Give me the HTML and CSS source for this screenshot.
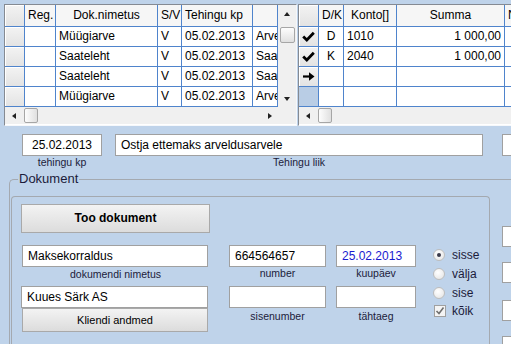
FILE: index.html
```html
<!DOCTYPE html>
<html lang="et">
<head>
    <meta charset="UTF-8">
    <meta name="viewport" content="width=device-width, initial-scale=1.0">
    <title>Tehing</title>
    <link rel="stylesheet" href="styles.css">
</head>
<body>
    <!-- document list and posting rows -->
    <div class="grids">
        <div class="grid grid-left">
            <div class="grid-main">
                <div class="cells">
                    <div class="cell rh"></div>
                    <div class="cell head">Reg.</div>
                    <div class="cell head center">Dok.nimetus</div>
                    <div class="cell head">S/V</div>
                    <div class="cell head">Tehingu kp</div>
                    <div class="cell head"></div>

                    <div class="cell rh"></div>
                    <div class="cell"></div>
                    <div class="cell">Müügiarve</div>
                    <div class="cell">V</div>
                    <div class="cell">05.02.2013</div>
                    <div class="cell">Arve</div>

                    <div class="cell rh"></div>
                    <div class="cell"></div>
                    <div class="cell">Saateleht</div>
                    <div class="cell">V</div>
                    <div class="cell">05.02.2013</div>
                    <div class="cell">Saat</div>

                    <div class="cell rh"></div>
                    <div class="cell"></div>
                    <div class="cell">Saateleht</div>
                    <div class="cell">V</div>
                    <div class="cell">05.02.2013</div>
                    <div class="cell">Saat</div>

                    <div class="cell rh"></div>
                    <div class="cell"></div>
                    <div class="cell">Müügiarve</div>
                    <div class="cell">V</div>
                    <div class="cell">05.02.2013</div>
                    <div class="cell">Arve</div>
                </div>
                <div class="vscroll">
                    <div class="sb-btn"><span class="tri up"></span></div>
                    <div class="thumb thumb-v"></div>
                    <div class="sb-fill"></div>
                    <div class="sb-btn"><span class="tri down"></span></div>
                </div>
            </div>
            <div class="hscroll">
                <div class="sb-btn"><span class="tri left"></span></div>
                <div class="thumb thumb-h"></div>
                <div class="sb-fill"></div>
                <div class="sb-btn"><span class="tri right"></span></div>
                <div class="sb-corner"></div>
            </div>
        </div>

        <div class="grid grid-right">
            <div class="grid-main">
                <div class="cells">
                    <div class="cell rh"></div>
                    <div class="cell head center">D/K</div>
                    <div class="cell head center">Konto[]</div>
                    <div class="cell head center">Summa</div>
                    <div class="cell head">N</div>

                    <div class="cell rh mark">
                        <svg width="13" height="11" viewBox="0 0 13 11"><path d="M1.2 5.5 L4.8 9 L11.8 1.8" fill="none" stroke="#000" stroke-width="2.8"/></svg>
                    </div>
                    <div class="cell center">D</div>
                    <div class="cell">1010</div>
                    <div class="cell right">1 000,00</div>
                    <div class="cell"></div>

                    <div class="cell rh mark">
                        <svg width="13" height="11" viewBox="0 0 13 11"><path d="M1.2 5.5 L4.8 9 L11.8 1.8" fill="none" stroke="#000" stroke-width="2.8"/></svg>
                    </div>
                    <div class="cell center">K</div>
                    <div class="cell">2040</div>
                    <div class="cell right">1 000,00</div>
                    <div class="cell"></div>

                    <div class="cell rh mark">
                        <svg width="13" height="9" viewBox="0 0 13 9"><path d="M1 4.5 H10" stroke="#000" stroke-width="2.2"/><path d="M7 0.3 L12.5 4.5 L7 8.7 Z" fill="#000"/></svg>
                    </div>
                    <div class="cell"></div>
                    <div class="cell"></div>
                    <div class="cell"></div>
                    <div class="cell"></div>

                    <div class="cell rh rh-sel"></div>
                    <div class="cell"></div>
                    <div class="cell"></div>
                    <div class="cell"></div>
                    <div class="cell"></div>
                </div>
            </div>
            <div class="hscroll">
                <div class="sb-btn"><span class="tri left"></span></div>
                <div class="thumb thumb-h"></div>
                <div class="sb-fill"></div>
            </div>
        </div>
    </div>

    <!-- deal header -->
    <div class="deal">
        <div class="field f-date">
            <div class="box center">25.02.2013</div>
            <div class="cap">tehingu kp</div>
        </div>
        <div class="field f-type">
            <div class="box">Ostja ettemaks arveldusarvele</div>
            <div class="cap">Tehingu liik</div>
        </div>
        <div class="field f-extra">
            <div class="box"></div>
        </div>
    </div>

    <fieldset class="doc">
        <legend>Dokument</legend>
        <div class="doc-body">
            <div class="panel">
                <div class="panel-grid">
                    <div class="btn btn-get">Too dokument</div>

                    <div class="box doc-name">Maksekorraldus</div>
                    <div class="box num-box c2 r3">664564657</div>
                    <div class="box date-box c3 r3">25.02.2013</div>

                    <div class="cap c1 r4 cap-name">dokumendi nimetus</div>
                    <div class="cap c2 r4">number</div>
                    <div class="cap c3 r4">kuupäev</div>

                    <div class="box client">Kuues Särk AS</div>
                    <div class="box num-box c2 r6"></div>
                    <div class="box date-box c3 r6"></div>

                    <div class="btn btn-client">Kliendi andmed</div>
                    <div class="cap c2 r7">sisenumber</div>
                    <div class="cap c3 r7">tähtaeg</div>

                    <div class="choices">
                        <div class="choice"><span class="radio on"></span>sisse</div>
                        <div class="choice"><span class="radio"></span>välja</div>
                        <div class="choice"><span class="radio"></span>sise</div>
                        <div class="choice choice-all">
                            <span class="check">
                                <svg width="10" height="10" viewBox="0 0 10 10"><path d="M1.5 5 L4 7.5 L8.5 1.5" fill="none" stroke="#6f6f6f" stroke-width="1.6"/></svg>
                            </span>kõik
                        </div>
                    </div>
                </div>
            </div>
            <div class="side">
                <div class="box side-box"></div>
                <div class="box side-box"></div>
                <div class="box side-box"></div>
                <div class="box side-box"></div>
            </div>
        </div>
    </fieldset>
</body>
</html>
```

FILE: styles.css
```css
body {
    margin: 0;
    width: 511px;
    height: 344px;
    overflow: hidden;
    background-color: #bfd3ea;
    font-family: "Liberation Sans", Arial, sans-serif;
    color: #000;
}

/* grids on top */
.grids {
    display: flex;
    gap: 1px;
    padding: 4px 0 0 4px;
    height: 122px;
}
.grid {
    box-sizing: border-box;
    height: 122px;
    flex-shrink: 0;
    display: flex;
    flex-direction: column;
    border: 1px solid;
    border-color: #858a92 #f6f8fb #f6f8fb #858a92;
    background: #fff;
    overflow: hidden;
}
.grid-left {
    width: 293px;
}
.grid-right {
    width: 240px;
}
.grid-main {
    display: flex;
    height: 102px;
}
.cells {
    display: grid;
    grid-template-rows: 22px;
    grid-auto-rows: 20px;
    align-content: start;
    overflow: hidden;
}
.grid-left .cells {
    width: 273px;
    grid-template-columns: 20px 31px 102px 24px 71px 25px;
}
.grid-right .cells {
    width: 238px;
    grid-template-columns: 20px 25px 53px 108px 40px;
}
.cell {
    box-sizing: border-box;
    border-right: 1px solid #4f84cc;
    border-bottom: 1px solid #4f84cc;
    padding: 0 3px;
    font-size: 12px;
    line-height: 19px;
    white-space: nowrap;
    overflow: hidden;
}
.head {
    background: #f6f6f6;
    line-height: 21px;
}
.rh {
    padding: 0;
    background: linear-gradient(#f3f3f3, #e3e3e3);
    box-shadow: inset 1px 1px #fff;
}
.rh-sel {
    background: #b9cde5;
    box-shadow: none;
}
.mark {
    display: flex;
    align-items: center;
    justify-content: center;
}
.center {
    text-align: center;
}
.right {
    text-align: right;
}

/* scrollbars */
.vscroll {
    width: 18px;
    display: flex;
    flex-direction: column;
    align-items: center;
    background: #f0f0f0;
}
.hscroll {
    height: 17px;
    display: flex;
    align-items: center;
    background: #f0f0f0;
}
.sb-btn {
    width: 17px;
    height: 17px;
    display: flex;
    align-items: center;
    justify-content: center;
    flex-shrink: 0;
}
.sb-fill {
    flex: 1;
}
.sb-corner {
    width: 18px;
    height: 17px;
}
.thumb {
    box-sizing: border-box;
    border: 1px solid #a6a6a6;
    border-radius: 2px;
    background: linear-gradient(#fdfdfd, #e0e0e0);
}
.thumb-v {
    width: 15px;
    height: 16px;
    margin-top: 5px;
}
.thumb-h {
    width: 14px;
    height: 15px;
    margin-left: 2px;
    background: linear-gradient(90deg, #fdfdfd, #e0e0e0);
}
.tri {
    width: 0;
    height: 0;
    border: 3px solid transparent;
}
.tri.up {
    border-bottom: 4px solid #222;
    border-top-width: 0;
}
.tri.down {
    border-top: 4px solid #222;
    border-bottom-width: 0;
}
.tri.left {
    border-right: 4px solid #222;
    border-left-width: 0;
}
.tri.right {
    border-left: 4px solid #222;
    border-right-width: 0;
}

/* inputs and captions */
.box {
    box-sizing: border-box;
    height: 22px;
    border: 1px solid #a0a0a0;
    background: #fff;
    padding: 0 5px;
    font-size: 12px;
    line-height: 20px;
    white-space: nowrap;
    overflow: hidden;
}
.cap {
    font-size: 10.5px;
    line-height: 13px;
    text-align: center;
    color: #1b1b3a;
}

.deal {
    display: flex;
    margin: 8px 0 0 22px;
}
.field {
    flex-shrink: 0;
}
.f-date {
    width: 80px;
}
.f-type {
    width: 368px;
    margin-left: 13px;
}
.f-extra {
    width: 60px;
    margin-left: 19px;
}

/* Dokument group */
.doc {
    margin: 3px 0 0 9px;
    padding: 0 0 0 1px;
    width: 540px;
    min-width: 0;
    border: 1px solid #a4a9b0;
    border-right: none;
    border-bottom: none;
    border-radius: 5px 0 0 0;
}
.doc legend {
    margin-left: 7px;
    padding: 0 1px;
    font-size: 13px;
    line-height: 14px;
    color: #1b1b3a;
}
.doc-body {
    display: flex;
    margin-top: 10px;
}
.panel {
    box-sizing: border-box;
    width: 479px;
    height: 160px;
    flex-shrink: 0;
    padding: 7px 0 0 9px;
    border: 1px solid #a4a9b0;
    border-bottom: none;
    border-radius: 4px 4px 0 0;
}
.panel-grid {
    display: grid;
    grid-template-columns: 208px 107px 96px 80px;
    grid-template-rows: 29px 12px 22px 14px 5px 22px 24px;
}
.c1 { grid-column: 1; }
.c2 { grid-column: 2; }
.c3 { grid-column: 3; }
.r3 { grid-row: 3; }
.r4 { grid-row: 4; }
.r6 { grid-row: 6; }
.r7 { grid-row: 7; }

.btn {
    box-sizing: border-box;
    border: 1px solid #a9a9a9;
    background: linear-gradient(#f3f3f3, #dcdcdc);
    text-align: center;
    color: #000;
}
.btn-get {
    grid-column: 1;
    grid-row: 1;
    width: 189px;
    font-size: 12px;
    font-weight: bold;
    line-height: 27px;
}
.btn-client {
    grid-column: 1;
    grid-row: 7;
    width: 186px;
    margin-left: 1px;
    font-size: 11px;
    line-height: 22px;
}
.doc-name {
    grid-column: 1;
    grid-row: 3;
    width: 186px;
    margin-left: 1px;
}
.cap-name {
    width: 189px;
    padding-top: 1px;
}
.client {
    grid-column: 1;
    grid-row: 6;
    width: 187px;
}
.num-box {
    width: 97px;
}
.date-box {
    width: 80px;
    color: #1a1ad0;
}
.c2.cap {
    width: 97px;
}
.c3.cap {
    width: 80px;
}
.r7.cap {
    padding-top: 2px;
}

.choices {
    grid-column: 4;
    grid-row: 3 / 8;
    display: flex;
    flex-direction: column;
}
.choice {
    display: flex;
    align-items: center;
    height: 19px;
    font-size: 12px;
    color: #1b1b3a;
}
.choice-all {
    height: 17px;
}
.radio {
    box-sizing: border-box;
    width: 12px;
    height: 12px;
    margin: 0 7px 0 1px;
    border: 1px solid #bdbdbd;
    border-radius: 50%;
    background: radial-gradient(circle at 40% 35%, #fff, #e2e2e2);
    display: flex;
    align-items: center;
    justify-content: center;
}
.radio.on::after {
    content: "";
    width: 4px;
    height: 4px;
    border-radius: 50%;
    background: #3a3a4a;
}
.check {
    box-sizing: border-box;
    width: 12px;
    height: 12px;
    margin: 0 6px 0 2px;
    border: 1px solid #a0a0a0;
    background: #f4f4f4;
    display: flex;
    align-items: center;
    justify-content: center;
}

.side {
    margin-left: 12px;
    padding-top: 30px;
}
.side-box {
    width: 40px;
    height: 21px;
    margin-bottom: 15px;
}
.side-box:nth-child(2) {
    margin-bottom: 17px;
}
```
